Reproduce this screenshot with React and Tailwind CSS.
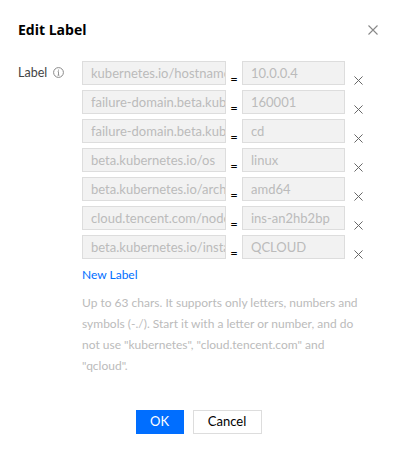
const rows = [
  ["kubernetes.io/hostname", "10.0.0.4"],
  ["failure-domain.beta.kubernetes.io/region", "160001"],
  ["failure-domain.beta.kubernetes.io/zone", "cd"],
  ["beta.kubernetes.io/os", "linux"],
  ["beta.kubernetes.io/arch", "amd64"],
  ["cloud.tencent.com/node-instance-id", "ins-an2hb2bp"],
  ["beta.kubernetes.io/instance-type", "QCLOUD"],
];

const CloseIcon = ({ size = 10, className = "" }) => (
  <svg width={size} height={size} viewBox="0 0 10 10" className={className}>
    <path d="M0.5 0.5 L9.5 9.5 M9.5 0.5 L0.5 9.5" stroke="currentColor" strokeWidth="1.1" fill="none" />
  </svg>
);

const InfoIcon = () => (
  <svg width="11" height="11" viewBox="0 0 11 11" className="text-[#888]">
    <circle cx="5.5" cy="5.5" r="4.9" stroke="currentColor" strokeWidth="1" fill="none" />
    <path d="M5.5 4.6 V8.2 M4.6 8.2 H6.4 M4.7 4.6 H5.5" stroke="currentColor" strokeWidth="0.9" fill="none" />
    <circle cx="5.5" cy="3.1" r="0.6" fill="currentColor" />
  </svg>
);

export default function App() {
  return (
    <div
      className="w-[397px] h-[454px] bg-white text-[12px] text-[#444] overflow-hidden"
      style={{ fontFamily: 'Lato, "Open Sans", sans-serif' }}
    >
      {/* header */}
      <div className="flex items-center justify-between pl-[18px] pr-[19px] pt-[21px] h-[39px]">
        <h2 className="text-[14px] font-bold text-black leading-[18px]" style={{ fontFamily: '"Open Sans", sans-serif' }}>
          Edit Label
        </h2>
        <CloseIcon size={10} className="text-[#888]" />
      </div>

      {/* body */}
      <div className="flex pl-[18px] pt-[22px]">
        <div className="w-[64px] flex items-start gap-[6px] pt-[5px] leading-[14px] text-[12.5px] text-[#444]">
          <span>Label</span>
          <span className="pt-[1px]">
            <InfoIcon />
          </span>
        </div>
        <div className="flex flex-col">
          <div className="flex flex-col gap-[5px]">
            {rows.map(([k, v]) => (
              <div key={k} className="flex h-[24px]">
                <div className="w-[144px] h-[24px] border border-[#ddd] bg-[#f2f2f2] text-[#bbb] text-[13px] pl-[8px] pr-[2px] leading-[22px] overflow-hidden whitespace-nowrap">
                  {k}
                </div>
                <span className="w-[16px] text-center text-black text-[13px] leading-[14px] pt-[11px]">=</span>
                <div className="w-[103px] h-[24px] border border-[#ddd] bg-[#f2f2f2] text-[#bbb] text-[13px] pl-[8px] leading-[22px] overflow-hidden whitespace-nowrap">
                  {v}
                </div>
                <span className="ml-[9px] pt-[15px]">
                  <CloseIcon size={9} className="text-[#666]" />
                </span>
              </div>
            ))}
          </div>
          <a className="mt-[8px] text-[#006eff] text-[12px] leading-[16px] cursor-pointer">New Label</a>
          <p className="mt-[9px] w-[300px] leading-[21px] text-[12px] text-[#bbb]">
            Up to 63 chars. It supports only letters, numbers and
            <br />
            symbols (-./). Start it with a letter or number, and do
            <br />
            not use "kubernetes", "cloud.tencent.com" and
            <br />
            "qcloud".
          </p>
        </div>
      </div>

      {/* footer */}
      <div className="flex justify-center gap-[9px] mt-[34px]">
        <button className="w-[48px] h-[24px] bg-[#006eff] text-white text-[13px]">OK</button>
        <button className="w-[69px] h-[24px] border border-[#ddd] bg-white text-[#000] text-[13px]">Cancel</button>
      </div>
    </div>
  );
}
